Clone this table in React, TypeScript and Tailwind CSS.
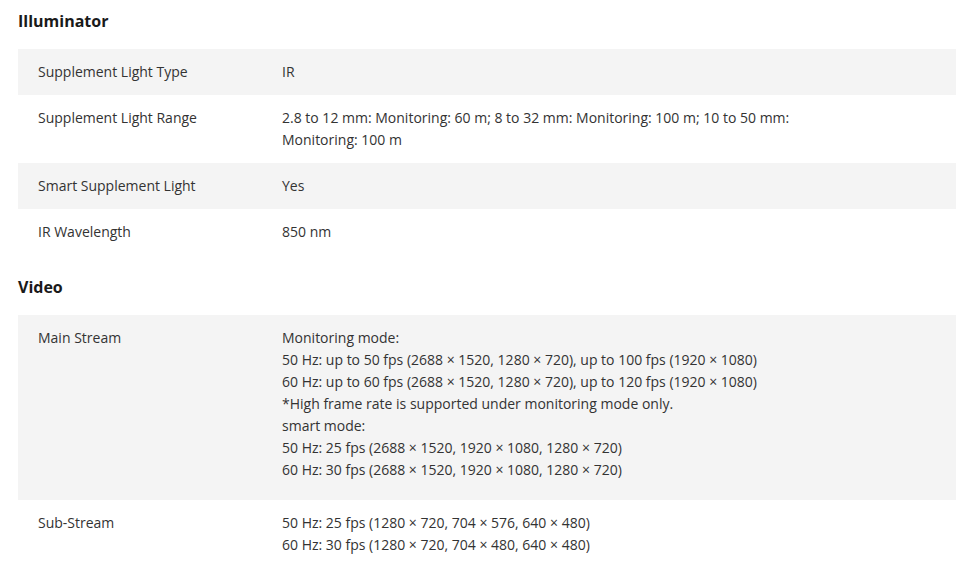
type TRow = {
  label: string;
  lines: string[];
  extraBottom?: boolean;
};

type TSection = {
  title: string;
  rows: TRow[];
};

const sections: TSection[] = [
  {
    title: "Illuminator",
    rows: [
      { label: "Supplement Light Type", lines: ["IR"] },
      {
        label: "Supplement Light Range",
        lines: [
          "2.8 to 12 mm: Monitoring: 60 m; 8 to 32 mm: Monitoring: 100 m; 10 to 50 mm:",
          "Monitoring: 100 m",
        ],
      },
      { label: "Smart Supplement Light", lines: ["Yes"] },
      { label: "IR Wavelength", lines: ["850 nm"] },
    ],
  },
  {
    title: "Video",
    rows: [
      {
        label: "Main Stream",
        lines: [
          "Monitoring mode:",
          "50 Hz: up to 50 fps (2688 × 1520, 1280 × 720), up to 100 fps (1920 × 1080)",
          "60 Hz: up to 60 fps (2688 × 1520, 1280 × 720), up to 120 fps (1920 × 1080)",
          "*High frame rate is supported under monitoring mode only.",
          "smart mode:",
          "50 Hz: 25 fps (2688 × 1520, 1920 × 1080, 1280 × 720)",
          "60 Hz: 30 fps (2688 × 1520, 1920 × 1080, 1280 × 720)",
        ],
        extraBottom: true,
      },
      {
        label: "Sub-Stream",
        lines: [
          "50 Hz: 25 fps (1280 × 720, 704 × 576, 640 × 480)",
          "60 Hz: 30 fps (1280 × 720, 704 × 480, 640 × 480)",
        ],
      },
    ],
  },
];

function SpecRow({ row, index }: { row: TRow; index: number }) {
  return (
    <div
      className={`flex ${index % 2 === 0 ? "bg-[#f4f4f4]" : "bg-white"} pt-3 ${
        row.extraBottom ? "pb-[19px]" : "pb-3"
      }`}
    >
      <div className="w-[264px] shrink-0 pl-5">{row.label}</div>
      <div className="flex-1 pr-5">
        {row.lines.map((l) => (
          <div key={l}>{l}</div>
        ))}
      </div>
    </div>
  );
}

export default function App() {
  return (
    <div
      className="w-[976px] h-[571px] overflow-hidden bg-white pl-[18px] pr-5 text-[14px] leading-[22px] text-[#333333]"
      style={{ fontFamily: '"Open Sans", "Liberation Sans", sans-serif' }}
    >
      {sections.map((s, i) => (
        <div key={s.title} className={i === 0 ? "pt-[9px]" : "pt-5"}>
          <h3 className="text-[16px] leading-6 font-bold text-[#1a1a1a] mb-4">{s.title}</h3>
          <div>
            {s.rows.map((r, idx) => (
              <SpecRow key={r.label} row={r} index={idx} />
            ))}
          </div>
        </div>
      ))}
    </div>
  );
}
